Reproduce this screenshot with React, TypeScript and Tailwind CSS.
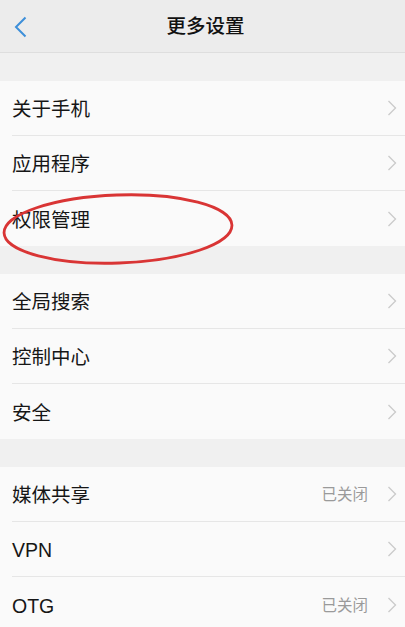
import React from 'react';

type Item = { label: string; value?: string };

const sections: Item[][] = [
  [{ label: '关于手机' }, { label: '应用程序' }, { label: '权限管理' }],
  [{ label: '全局搜索' }, { label: '控制中心' }, { label: '安全' }],
  [{ label: '媒体共享', value: '已关闭' }, { label: 'VPN' }, { label: 'OTG', value: '已关闭' }],
];

const font = { fontFamily: '"Liberation Sans", "Noto Sans CJK SC", sans-serif' };

function Chevron() {
  return (
    <svg width="10" height="16" viewBox="0 0 10 16" className="shrink-0">
      <path d="M1.5 1 L8.5 8 L1.5 15" fill="none" stroke="#cacaca" strokeWidth="1.3" />
    </svg>
  );
}

function Row({ item, last }: { item: Item; last: boolean }) {
  return (
    <div className="h-[55px] bg-[#fafafa] pl-3 flex">
      <div className={`flex-1 flex items-center pr-[8px] ${last ? '' : 'border-b border-[#e6e6e6]'}`}>
        <span className="flex-1 text-[19.5px] text-[#161616] pt-[4px]">{item.label}</span>
        {item.value && <span className="text-[15.5px] text-[#9a9a9a] mr-[19px] pt-[2px]">{item.value}</span>}
        <Chevron />
      </div>
    </div>
  );
}

export default function App() {
  return (
    <div className="relative w-[405px] h-[627px] overflow-hidden bg-[#f0f0f0]" style={font}>
      {/* Header */}
      <div className="h-[53px] bg-[#ececec] border-b border-[#dedede] flex items-center relative">
        <svg width="14" height="22" viewBox="0 0 14 22" className="absolute left-[14px] top-[16px]">
          <path d="M11.5 1.5 L2 11 L11.5 20.5" fill="none" stroke="#3d8fd9" strokeWidth="2" />
        </svg>
        <div className="flex-1 text-center text-[19.5px] font-medium text-[#111] pl-[6px] pt-[2px]">更多设置</div>
      </div>

      {sections.map((sec, i) => (
        <div key={i} className="pt-[28px]">
          {sec.map((item, j) => (
            <Row key={item.label} item={item} last={j === sec.length - 1} />
          ))}
        </div>
      ))}

      {/* Red annotation ellipse */}
      <svg className="absolute left-0 top-[188px] pointer-events-none" width="240" height="82" viewBox="0 0 240 82">
        <ellipse cx="118" cy="41" rx="114" ry="34" fill="none" stroke="#d93535" strokeWidth="2.8" transform="rotate(-2 118 41)" />
      </svg>
    </div>
  );
}
